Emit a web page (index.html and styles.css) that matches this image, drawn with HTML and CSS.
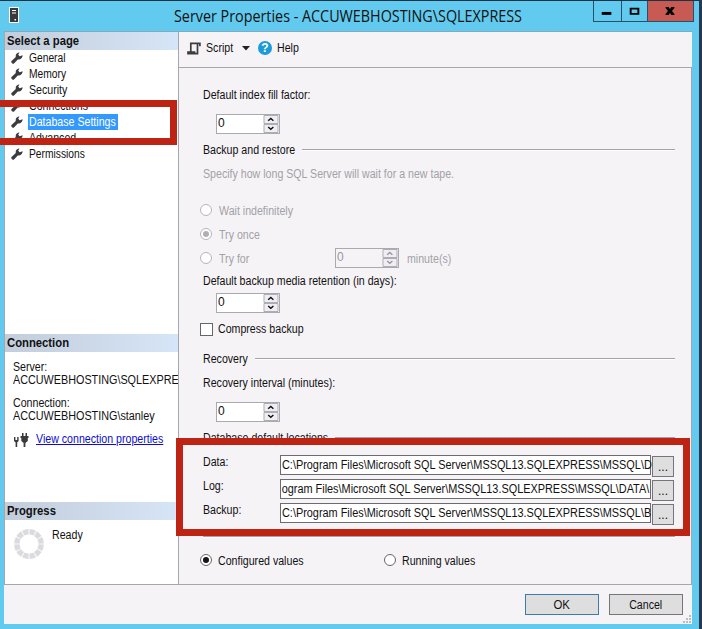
FILE: index.html
```html
<!DOCTYPE html>
<html lang="en">
<head>
<meta charset="utf-8">
<title>Server Properties</title>
<link rel="stylesheet" href="styles.css">
</head>
<body>
<svg class="defs" aria-hidden="true">
  <symbol id="wrench" viewBox="0 0 12 12"><path d="M.5 9 4.8 5C4.2 2.6 5.8.5 8.6.4L7.2 2.4 8.6 4.2 11.6 3.2C11.8 5.9 9.4 7.9 6.8 7.4L3 11.4C1.4 12.4-.4 10.5.5 9Z" fill="#3c3c3e"/></symbol>
  <symbol id="arrows" viewBox="0 0 16 18"><path d="M1 .5H15V8.5H1ZM1 9.5H15V17.5H1Z" fill="#f0eef2" stroke="#adadb5"/><path d="M5.2 5.8 7.8 3.4 10.4 5.8M5.2 11.9 7.8 14.3 10.4 11.9" fill="none" stroke="currentColor" stroke-width="1.4"/></symbol>
</svg>
<div class="window">
  <header class="titlebar">
    <svg class="server" viewBox="0 0 10 16"><rect x=".5" y=".5" width="9" height="15" fill="#3a3a3c" stroke="#fff"/><path d="M3 3.5H7M3 6H7" stroke="#fff"/><rect x="5.5" y="12" width="1.5" height="1.5" fill="#fff"/></svg>
    <h1><span class="t t-title">Server Properties - ACCUWEBHOSTING\SQLEXPRESS</span></h1>
    <div class="controls">
      <span class="ctl min"><svg viewBox="0 0 28 20"><path d="M8 12.5H18" stroke="#000" stroke-width="3"/></svg></span>
      <span class="ctl max"><svg viewBox="0 0 26 20"><path d="M9 7.5H17V13H9Z" fill="none" stroke="#000" stroke-width="2"/></svg></span>
      <span class="ctl close"><svg viewBox="0 0 46 20"><path d="M18 6H21L22.5 8 24 6H27V7L24.5 10 27 13V14H24L22.5 12 21 14H18V13L20.4 10 18 7Z" fill="#000"/></svg></span>
    </div>
  </header>
  <div class="main">
    <aside class="side">
      <h2><span class="t t-head">Select a page</span></h2>
      <ul class="pages">
        <li><svg><use href="#wrench"/></svg><span class="t t-tight">General</span></li>
        <li><svg><use href="#wrench"/></svg><span class="t t-tight">Memory</span></li>
        <li><svg><use href="#wrench"/></svg><span class="t">Security</span></li>
        <li><svg><use href="#wrench"/></svg><span class="t">Connections</span></li>
        <li class="selected"><svg><use href="#wrench"/></svg><b><span class="t">Database Settings</span></b></li>
        <li><svg><use href="#wrench"/></svg><span class="t">Advanced</span></li>
        <li><svg><use href="#wrench"/></svg><span class="t t-tight">Permissions</span></li>
      </ul>
      <h2><span class="t t-head">Connection</span></h2>
      <div class="connection">
        <p><span class="t">Server:</span></p>
        <p><span class="t t-caps">ACCUWEBHOSTING\SQLEXPRE</span></p>
        <p class="second"><span class="t">Connection:</span></p>
        <p><span class="t t-caps">ACCUWEBHOSTING\stanley</span></p>
        <div class="view"><svg viewBox="0 0 15 14"><path d="M0 4H1.4V7H3.2V4H4.6V8L3.2 9.6V14H1.6V9.6L0 8ZM8 0H9.5V3H11.5V0H13V3H14.5V5H13.8V8L11.4 10V14H9.6V10L7.3 8V5H6.5V3H8Z" fill="#3b3b3d"/></svg><a href="#"><span class="t">View connection properties</span></a></div>
      </div>
      <h2><span class="t t-head">Progress</span></h2>
      <div class="progress">
        <svg viewBox="0 0 30 30"><circle cx="15" cy="15" r="12.2" pathLength="120" fill="none" stroke="#dbdade" stroke-width="5.4" stroke-dasharray="8.6 1.4" stroke-dashoffset="-.7"/></svg>
        <span class="t">Ready</span>
      </div>
    </aside>
    <section class="content">
      <div class="toolbar">
        <svg class="script" viewBox="0 0 14 13"><path d="M3.8 10.5V1.3H12.9V4.2M10.5 1.3V11.6H1V10.2H8.4" fill="none" stroke="#3c3c3e" stroke-width="1.7"/></svg>
        <span class="t tb-script">Script</span>
        <svg class="caret" viewBox="0 0 8 5"><path d="M0 0H8L4 4.6Z" fill="#222"/></svg>
        <span class="help">?</span>
        <span class="t">Help</span>
      </div>
      <div class="form">
        <div class="row h24"><span class="t">Default index fill factor:</span></div>
        <div class="row h34 indent"><span class="spin"><span class="t">0</span><svg><use href="#arrows"/></svg></span></div>
        <div class="row h18 group"><span class="legend g1"><span class="t">Backup and restore</span></span><i></i></div>
        <div class="row h30 off"><span class="t">Specify how long SQL Server will wait for a new tape.</span></div>
        <div class="row h24 off opt first"><span class="radio"></span><span class="t">Wait indefinitely</span></div>
        <div class="row h24 off opt"><span class="radio on"></span><span class="t">Try once</span></div>
        <div class="row h24 off opt"><span class="radio"></span><span class="tryfor"><span class="t">Try for</span></span><span class="spin disabled"><span class="t">0</span><svg><use href="#arrows"/></svg></span><span class="t minutes">minute(s)</span></div>
        <div class="row h20"><span class="t">Default backup media retention (in days):</span></div>
        <div class="row h24 indent"><span class="spin"><span class="t">0</span><svg><use href="#arrows"/></svg></span></div>
        <div class="row h28 opt"><span class="check"></span><span class="t">Compress backup</span></div>
        <div class="row h32 group"><span class="legend g2"><span class="t">Recovery</span></span><i></i></div>
        <div class="row h16"><span class="t">Recovery interval (minutes):</span></div>
        <div class="row h42 indent"><span class="spin"><span class="t">0</span><svg><use href="#arrows"/></svg></span></div>
        <div class="row h10 group"><span class="legend g3"><span class="t">Database default locations</span></span><i></i></div>
        <div class="paths">
          <label><span class="t">Data:</span></label><div class="path"><span class="t t-path">C:\Program Files\Microsoft SQL Server\MSSQL13.SQLEXPRESS\MSSQL\D</span></div><button>...</button>
          <label><span class="t">Log:</span></label><div class="path end"><span class="t t-path">ogram Files\Microsoft SQL Server\MSSQL13.SQLEXPRESS\MSSQL\DATA\</span></div><button>...</button>
          <label><span class="t">Backup:</span></label><div class="path"><span class="t t-path">C:\Program Files\Microsoft SQL Server\MSSQL13.SQLEXPRESS\MSSQL\B</span></div><button>...</button>
        </div>
        <div class="row h24 group"><i></i></div>
        <div class="row h24 opt strong"><span class="radio on"></span><span class="configured"><span class="t">Configured values</span></span><span class="radio"></span><span class="t">Running values</span></div>
      </div>
    </section>
  </div>
  <footer class="footer">
    <button class="ok"><span class="t t-ok">OK</span></button>
    <button><span class="t">Cancel</span></button>
    <svg class="grip" viewBox="0 0 8 8"><path d="M6 0h2v2H6zM3 3h2v2H3zM6 3h2v2H6zM0 6h2v2H0zM3 6h2v2H3zM6 6h2v2H6z" fill="#bdbcc2"/></svg>
  </footer>
</div>
<div class="mark mark-page"></div>
<div class="mark mark-paths"></div>
</body>
</html>
```

FILE: styles.css
```css
* { box-sizing: border-box; }
body {
  margin: 0;
  width: 702px;
  height: 629px;
  overflow: hidden;
  position: relative;
  background: #253a50;
  font: 12px/16px "Liberation Sans", Arial, sans-serif;
  color: #111;
}
h1, h2, p, ul { margin: 0; padding: 0; font-size: inherit; }
svg { display: block; flex: none; }
.defs { position: absolute; width: 0; height: 0; }
.t { display: inline-block; white-space: nowrap; transform: scaleX(.885); transform-origin: 0 50%; }
.t-tight { transform: scaleX(.855); }
.t-head { transform: scaleX(.94); }
.t-caps { transform: scaleX(.9); }
.t-path { transform: scaleX(.907); }
.t-ok { transform: scaleX(.95); }

.window {
  display: flex;
  flex-direction: column;
  width: 699px;
  height: 629px;
  padding: 0 7px 5px 4px;
  border-top: 1px solid #1d3346;
  background: #62caee;
}
.titlebar { display: flex; flex: none; height: 30px; margin-right: -2px; }
.server { width: 10px; height: 16px; margin: 6px 0 0 5px; }
h1 { flex: 1; padding: 4px 0 0 155px; font: 16px/22px "Open Sans", "Noto Sans", sans-serif; }
.t-title { transform: scaleX(.896); }
.controls { display: flex; flex: none; width: 101px; height: 21px; border: 1px solid #28506a; border-top: 0; }
.ctl { border-right: 1px solid #28506a; }
.min { width: 28px; }
.max { width: 26px; }
.close { flex: 1; border: 0; background: #c75a52; }
.ctl svg { width: 100%; height: 20px; }

.main { display: flex; height: 554px; border-top: 1px solid #83a9bf; border-bottom: 1px solid #a5a7ae; }
.side { display: flex; flex-direction: column; width: 175px; border: solid #a5a7ae; border-width: 0 1px; background: #fff; overflow: hidden; }
.side h2 { flex: none; height: 18px; padding-left: 2px; font: bold 12px/19px "Liberation Sans", Arial, sans-serif; background: linear-gradient(90deg, #c3cddb, #d6e5f7); }
.pages { height: 284px; list-style: none; }
.pages li { display: flex; align-items: center; height: 16px; }
.pages svg { width: 12px; height: 12px; margin: 0 6px 0 6px; }
.pages b { width: 90px; height: 16px; margin-left: -1px; padding-left: 1px; font-weight: normal; background: #3399ff; color: #fff; }
.connection { height: 150px; padding: 9px 0 0 8px; }
.connection p { height: 13px; line-height: 13px; }
.connection .second { margin-top: 10px; }
.view { display: flex; margin-top: 8px; }
.view svg { width: 15px; height: 14px; margin: 2px 8px 0 1px; }
.view a { margin-left: -1px; color: #0d0dd0; }
.view .t { text-decoration: underline; }
.progress { display: flex; padding: 7px 0 0 8px; }
.progress svg { width: 30px; height: 30px; margin: 2px 8px 0 1px; }

.content { flex: 1; background: #f6f3f7; }
.toolbar { display: flex; align-items: center; height: 36px; padding: 0 0 3px 8px; border-bottom: 1px solid #a5a7ae; }
.script { width: 14px; height: 13px; margin-right: 5px; }
.tb-script { width: 36px; }
.caret { width: 8px; height: 5px; margin-right: 8px; }
.help { width: 14px; height: 14px; margin-right: 5px; border-radius: 50%; background: #1c9bd8; color: #fff; font-weight: bold; line-height: 14px; text-align: center; }
.form { height: 517px; padding: 15px 16px 0 24px; border-right: 1px solid #a5a7ae; }
.row { display: flex; align-items: center; }
.h10 { height: 10px; } .h16 { height: 16px; } .h18 { height: 18px; } .h20 { height: 20px; }
.h24 { height: 24px; } .h28 { height: 28px; } .h30 { height: 30px; } .h32 { height: 32px; }
.h34 { height: 34px; } .h42 { height: 42px; }
.indent { padding-left: 13px; }
.off { color: #a2a1a5; }
.first { margin-top: 10px; }
.group i { flex: 1; height: 1px; margin-top: -1px; background: #a3a2a8; box-shadow: 0 1px #fff; }
.g1 { width: 99px; } .g2 { width: 52px; } .g3 { width: 132px; }
.spin { display: flex; flex: none; width: 64px; height: 20px; border: 1px solid #a9a9b2; background: #fff; color: #111; }
.spin .t { width: 46px; padding-left: 1px; transform: none; flex: none; }
.spin svg { width: 16px; height: 18px; }
.disabled { background: #f6f3f7; color: #999; margin-top: -2px; }
.opt { margin-left: -3px; }
.radio { flex: none; width: 12px; height: 12px; margin: -2px 7px 0 0; padding: 2px; border: 1px solid #b6b5b9; border-radius: 50%; background: #fff; }
.radio.on::before { content: ""; display: block; width: 6px; height: 6px; border-radius: 50%; background: #b0b0b4; }
.strong .radio { border-color: #66666a; margin-right: 6px; }
.strong .radio.on::before { background: #151515; }
.check { width: 13px; height: 13px; margin-right: 5px; border: 1px solid #66666a; background: #fff; }
.tryfor { width: 116px; }
.minutes { margin-left: 8px; }
.configured { width: 166px; }
.paths { display: grid; grid-template-columns: 77px 371px 22px; grid-auto-rows: 24px; padding-top: 10px; }
.paths label { padding-top: 1px; }
.path { height: 20px; margin-top: 2px; padding: 1px; border: 1px solid #6c6c70; background: #fff; }
.path.end { display: flex; justify-content: flex-end; }
.path.end .t { transform-origin: 100% 50%; }
button { padding: 0; border: 1px solid #75757a; background: #dfdedf; color: #111; font: 12px/16px "Liberation Sans", Arial, sans-serif; }
.paths button { width: 22px; height: 21px; margin: 3px 0 0 1px; }
.footer { display: flex; flex: 1; align-items: flex-start; justify-content: flex-end; padding: 9px 1px 0 0; background: #f6f3f7; }
.footer button { width: 74px; height: 21px; margin-right: 8px; }
.footer button.ok { margin-right: 10px; border-color: #3b7cab; }
.footer .t { transform-origin: 50% 50%; }
.grip { align-self: flex-end; width: 8px; height: 8px; margin: 0 0 1px -8px; }
.mark { position: absolute; border: 7px solid #be2413; }
.mark-page { left: -7px; top: 100px; width: 184px; height: 45px; }
.mark-paths { left: 176px; top: 438px; width: 514px; height: 98px; }
```
